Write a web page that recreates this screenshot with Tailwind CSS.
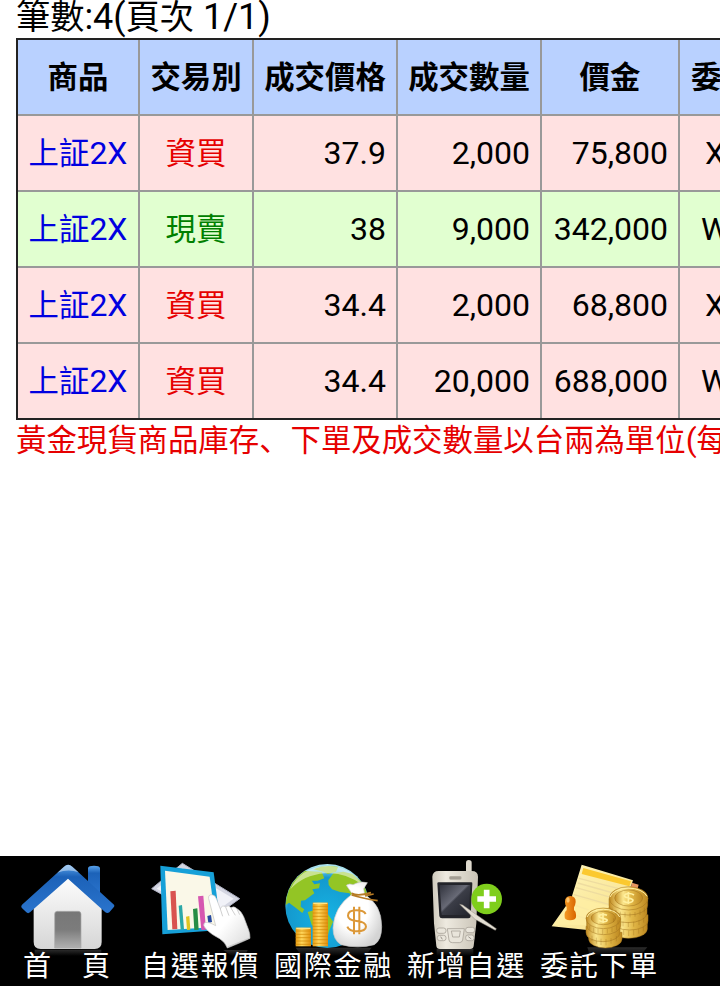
<!DOCTYPE html>
<html lang="zh-Hant">
<head>
    <meta charset="UTF-8">
    <meta name="viewport" content="width=device-width, initial-scale=1.0">
    <title>成交查詢</title>
    <script src="https://cdn.jsdelivr.net/npm/@tailwindcss/browser@4"></script>
    <style>
        body {
            font-family: Roboto, "Noto Sans CJK TC", sans-serif;
        }
    </style>
</head>
<body class="bg-white text-black h-[986px] w-[720px] overflow-hidden flex flex-col">

    <main class="flex-1 overflow-hidden pl-4 whitespace-nowrap text-[32px]">
        <p class="h-[38px] text-[36px] leading-[34px]"><span class="text-[34.2px]">筆數</span>:4(<span class="text-[34.2px]">頁次</span> 1/1)</p>

        <!-- 成交明細 -->
        <div class="w-[808px] border-2 border-[#222] bg-[#999] grid grid-cols-[120px_112px_142px_142px_136px_142px] auto-rows-[74px] gap-0.5 leading-[74px] *:overflow-hidden">
            <div class="bg-[#b9d1ff] text-center font-bold text-[30.4px] pt-px">商品</div>
            <div class="bg-[#b9d1ff] text-center font-bold text-[30.4px] pt-px">交易別</div>
            <div class="bg-[#b9d1ff] text-center font-bold text-[30.4px] pt-px">成交價格</div>
            <div class="bg-[#b9d1ff] text-center font-bold text-[30.4px] pt-px">成交數量</div>
            <div class="bg-[#b9d1ff] text-center font-bold text-[30.4px] pt-px">價金</div>
            <div class="bg-[#b9d1ff] pl-[11px] font-bold text-[30.4px] pt-px">委</div>

            <div class="bg-[#ffe1e1] text-center text-[#0000e0]"><span class="text-[30.4px]">上証</span>2X</div>
            <div class="bg-[#ffe1e1] text-center text-[30.4px] text-[#e60000] pt-px">資買</div>
            <div class="bg-[#ffe1e1] text-right pr-[10px]">37.9</div>
            <div class="bg-[#ffe1e1] text-right pr-[10px]">2,000</div>
            <div class="bg-[#ffe1e1] text-right pr-[10px]">75,800</div>
            <div class="bg-[#ffe1e1] pl-[25px]">X</div>

            <div class="bg-[#e1ffd0] text-center text-[#0000e0]"><span class="text-[30.4px]">上証</span>2X</div>
            <div class="bg-[#e1ffd0] text-center text-[30.4px] text-[#008000] pt-px">現賣</div>
            <div class="bg-[#e1ffd0] text-right pr-[10px]">38</div>
            <div class="bg-[#e1ffd0] text-right pr-[10px]">9,000</div>
            <div class="bg-[#e1ffd0] text-right pr-[10px]">342,000</div>
            <div class="bg-[#e1ffd0] pl-[21px]">W</div>

            <div class="bg-[#ffe1e1] text-center text-[#0000e0]"><span class="text-[30.4px]">上証</span>2X</div>
            <div class="bg-[#ffe1e1] text-center text-[30.4px] text-[#e60000] pt-px">資買</div>
            <div class="bg-[#ffe1e1] text-right pr-[10px]">34.4</div>
            <div class="bg-[#ffe1e1] text-right pr-[10px]">2,000</div>
            <div class="bg-[#ffe1e1] text-right pr-[10px]">68,800</div>
            <div class="bg-[#ffe1e1] pl-[25px]">X</div>

            <div class="bg-[#ffe1e1] text-center text-[#0000e0]"><span class="text-[30.4px]">上証</span>2X</div>
            <div class="bg-[#ffe1e1] text-center text-[30.4px] text-[#e60000] pt-px">資買</div>
            <div class="bg-[#ffe1e1] text-right pr-[10px]">34.4</div>
            <div class="bg-[#ffe1e1] text-right pr-[10px]">20,000</div>
            <div class="bg-[#ffe1e1] text-right pr-[10px]">688,000</div>
            <div class="bg-[#ffe1e1] pl-[21px]">W</div>
        </div>

        <p class="leading-[36px] text-[#e60000]"><span class="text-[30.4px]">黃金現貨商品庫存<span class="mr-px font-['Noto_Sans_CJK_SC']" lang="zh-CN">、</span>下單及成交數量以台兩為單位</span>(<span class="text-[30.4px]">每</span></p>
    </main>

    <!-- 底部選單 -->
    <nav class="h-[130px] bg-black text-white grid grid-cols-[repeat(5,133px)] text-[28px] leading-[28px] tracking-[1.7px] whitespace-nowrap">
        <a class="flex flex-col items-center">
            <svg class="w-[133px] h-[100px] shrink-0" viewBox="0 18 399 300">
                <defs>
                    <linearGradient id="roof" x1="0" y1="0" x2="0" y2="1"><stop offset="0" stop-color="#5aa4ec"/><stop offset=".25" stop-color="#1c62b8"/><stop offset="1" stop-color="#2a74cd"/></linearGradient>
                    <linearGradient id="wall" x1="0" y1="0" x2="0" y2="1"><stop offset="0" stop-color="#fff"/><stop offset="1" stop-color="#d6d6d6"/></linearGradient>
                    <linearGradient id="door" x1="0" y1="0" x2="0" y2="1"><stop offset="0" stop-color="#777"/><stop offset=".5" stop-color="#7c7c7c"/><stop offset="1" stop-color="#b0b0b0"/></linearGradient>
                    <linearGradient id="mirror" x1="0" y1="0" x2="0" y2="1"><stop offset="0" stop-color="#2c2c2c"/><stop offset="1" stop-color="#000"/></linearGradient>
                </defs>
                <path d="M104 299H304V318H104Z" fill="url(#mirror)"/>
                <path d="M264 54Q266 47 282 47Q298 47 300 54V136L264 104Z" fill="url(#roof)"/>
                <path d="M101 160L204 70L305 160V276Q305 297 284 297H122Q101 297 101 276Z" fill="url(#wall)"/>
                <path d="M164 294V192Q164 184 172 184H235Q243 184 243 192V294Z" fill="url(#door)" stroke="#aaa" stroke-width="2"/>
                <path d="M192 50Q204 38 217 50L342 164Q345 168 341 172L328 187Q322 191 316 187L204 86L90 187Q84 192 79 187L65 173Q62 168 66 164Z" fill="url(#roof)"/>
                <path d="M192 50Q204 38 217 50L236 67Q205 56 172 68Z" fill="#fff" opacity=".45"/>
            </svg>
            <span class="-mt-[3px] w-[87px] flex justify-between tracking-normal"><span>首</span><span>頁</span></span>
        </a>
        <a class="flex flex-col items-center">
            <svg class="w-[133px] h-[100px] shrink-0" viewBox="-6 18 399 300">
                <defs>
                    <linearGradient id="hand" x1="0" y1="0" x2="1" y2="1"><stop offset=".5" stop-color="#fff"/><stop offset="1" stop-color="#d8d8d8"/></linearGradient>
                </defs>
                <path d="M265 300H338L330 318H290Z" fill="url(#mirror)"/>
                <path d="M50 116L142 40L314 146L222 212Z" fill="#d4d6e2" stroke="#aeb1c2" stroke-width="3"/>
                <path d="M65 116L142 54L296 146L222 200Z" fill="#f1f2f8"/>
                <path d="M76 47L236 67L259 240L82 253Z" fill="#16a0d8"/>
                <path d="M90 62L224 80L244 231L98 240Z" fill="#faf8e8"/>
                <path d="M106 124L122 122L127 237L112 238Z" fill="#d95350"/>
                <path d="M131 167L141 165L147 238L137 239Z" fill="#2aa8a8"/>
                <path d="M153 200L163 198L166 239L156 240Z" fill="#dfc520"/>
                <path d="M174 177L187 175L191 239L178 240Z" fill="#278d45"/>
                <path d="M189 139L205 137L213 239L199 240Z" fill="#d657b0"/>
                <path d="M217 198L228 195L231 216L220 219Z" fill="#2749a0"/>
                <path d="M221 146Q219 134 231 134Q241 135 245 148L256 177Q260 164 272 170Q280 164 288 173Q297 167 306 176Q318 182 326 200L341 240Q345 250 345 265Q322 276 277 294Q271 277 254 266Q229 254 214 238Q202 226 208 219Q216 214 232 222L242 227Z" fill="url(#hand)" stroke="#c2c2c2" stroke-width="2"/>
                <path d="M256 177L263 199M272 171L282 197M288 174L301 196M306 177L314 194M277 291L344 264" fill="none" stroke="#c5c5c5" stroke-width="2.5"/>
            </svg>
            <span class="-mt-[3px] pl-[2px]">自選報價</span>
        </a>
        <a class="flex flex-col items-center">
            <svg class="w-[133px] h-[100px] shrink-0" viewBox="3 18 399 300">
                <defs>
                    <radialGradient id="globe" cx=".5" cy=".65" r=".65"><stop offset="0" stop-color="#17b4e4"/><stop offset=".75" stop-color="#1499ce"/><stop offset="1" stop-color="#b5e8f0"/></radialGradient>
                    <linearGradient id="gold" x1="0" y1="0" x2="1" y2="0"><stop offset="0" stop-color="#e99d13"/><stop offset=".4" stop-color="#ffd75c"/><stop offset="1" stop-color="#e08e0c"/></linearGradient>
                    <radialGradient id="sack" cx=".4" cy=".4" r=".65"><stop offset=".5" stop-color="#fff"/><stop offset="1" stop-color="#d4d4d4"/></radialGradient>
                    <clipPath id="earth"><circle cx="187" cy="168" r="125"/></clipPath>
                </defs>
                <path d="M92 293H320L300 318H110Z" fill="url(#mirror)"/>
                <circle cx="187" cy="168" r="126" fill="url(#globe)"/>
                <g clip-path="url(#earth)" fill="#93c525">
                    <path d="M55 170L70 105L118 62L170 66L178 85L158 92L140 92L148 103L165 100L162 115L142 118L148 130L120 151L108 152L107 170L118 178L112 189L90 172L72 158Z"/>
                    <path d="M145 58Q180 42 219 51L213 66L188 72L176 65Z"/>
                    <path d="M190 91L205 70L235 65L262 72L300 105L312 150L280 180L262 160L254 130L225 126L201 118L191 105Z"/>
                    <path d="M128 186L150 180L189 193L204 215L192 243L182 286L160 240L140 225Z"/>
                </g>
                <path d="M76 118Q105 52 187 47Q258 49 293 105Q240 65 180 70Q115 75 76 118Z" fill="#fff" opacity=".5"/>
                <path d="M92 233H138V289H92Z" fill="url(#gold)"/>
                <path d="M143 158H189V289H143Z" fill="url(#gold)"/>
                <path d="M92 243H138M92 253H138M92 263H138M92 273H138M92 283H138M143 169H189M143 179H189M143 189H189M143 199H189M143 209H189M143 219H189M143 229H189M143 239H189M143 249H189M143 259H189M143 269H189M143 280H189" stroke="#cf8500" stroke-width="2"/>
                <path d="M94 235H136M145 160H187" stroke="#ffe486" stroke-width="4"/>
                <path d="M262 132L244 106Q253 99 264 104L276 99Q290 94 307 98L296 116L299 134Q350 163 350 230Q350 270 328 284Q278 297 228 284Q204 270 204 234Q207 170 262 132Z" fill="url(#sack)" stroke="#c9c9c9" stroke-width="2"/>
                <path d="M260 130Q278 140 318 128M260 135Q290 145 338 152M300 138L326 132" fill="none" stroke="#b77b25" stroke-width="5"/>
                <path d="M302 192Q296 181 274 181Q249 181 249 197Q249 210 275 213Q303 216 303 230Q302 244 276 244Q252 244 247 230M267 170V253M283 170V253" fill="none" stroke="#dc9838" stroke-width="6"/>
            </svg>
            <span class="-mt-[3px] pl-[2px]">國際金融</span>
        </a>
        <a class="flex flex-col items-center">
            <svg class="w-[133px] h-[100px] shrink-0" viewBox="-3 18 399 300">
                <defs>
                    <linearGradient id="shell" x1="0" y1="0" x2="1" y2="0"><stop offset="0" stop-color="#cfcabd"/><stop offset=".3" stop-color="#eeeae0"/><stop offset="1" stop-color="#c9c3b6"/></linearGradient>
                    <linearGradient id="lcd" x1="0" y1="0" x2="1" y2="1"><stop offset="0" stop-color="#30323c"/><stop offset=".45" stop-color="#686a76"/><stop offset=".5" stop-color="#3b3d47"/><stop offset="1" stop-color="#22242c"/></linearGradient>
                </defs>
                <path d="M110 297H220V318H110Z" fill="url(#mirror)"/>
                <path d="M198 70V38Q198 30 206 30Q215 30 215 38V70Z" fill="#dfdace"/>
                <path d="M97 80Q98 63 116 63H215Q234 63 234 80L229 220L221 288Q220 297 210 297H120Q110 297 109 288L102 220Z" fill="url(#shell)"/>
                <rect x="147" y="78" width="38" height="11" rx="5" fill="#b7b1a5"/>
                <path d="M150 82H182M150 86H182" stroke="#8a857c" stroke-width="1.5"/>
                <path d="M112 100Q112 97 116 97H213Q218 97 217 101L212 198Q212 205 205 205H126Q119 205 118 198Z" fill="#23242a"/>
                <path d="M119 105H211L206 195H125Z" fill="url(#lcd)"/>
                <g fill="#e9e5db" stroke="#aaa49a" stroke-width="2.5">
                    <rect x="110" y="234" width="28" height="16" rx="7"/>
                    <rect x="112" y="256" width="26" height="16" rx="7"/>
                    <rect x="197" y="232" width="27" height="16" rx="7"/>
                    <rect x="197" y="255" width="25" height="17" rx="7"/>
                    <path d="M142 236H193L188 270Q186 278 178 278H157Q148 278 147 270Z"/>
                    <path d="M154 243H181L178 261H158Z"/>
                </g>
                <path d="M122 260L127 268M205 260L214 267" stroke="#98928a" stroke-width="3"/>
                <circle cx="260" cy="147" r="46" fill="#7fce1c"/>
                <path d="M260 119V175M232 147H288" stroke="#fff" stroke-width="17"/>
                <path d="M179 163L188 165L289 236L286 241L225 208Z" fill="#e4dfd3" stroke="#958f84" stroke-width="1.5"/>
            </svg>
            <span class="-mt-[3px] pl-[2px]">新增自選</span>
        </a>
        <a class="flex flex-col items-center">
            <svg class="w-[133px] h-[100px] shrink-0" viewBox="6 18 399 300">
                <defs>
                    <linearGradient id="coin" x1="0" y1="0" x2="1" y2="0"><stop offset="0" stop-color="#c08a22"/><stop offset=".3" stop-color="#fbe68c"/><stop offset=".6" stop-color="#e2b848"/><stop offset="1" stop-color="#bd8820"/></linearGradient>
                    <linearGradient id="stamp" x1="0" y1="0" x2="1" y2="0"><stop offset="0" stop-color="#f59a24"/><stop offset="1" stop-color="#d86500"/></linearGradient>
                    <linearGradient id="paper" x1="0" y1="0" x2="1" y2="1"><stop offset="0" stop-color="#fff6bd"/><stop offset="1" stop-color="#f7df86"/></linearGradient>
                </defs>
                <path d="M172 292H352L330 318H180Z" fill="url(#mirror)"/>
                <path d="M306 98L326 104L320 125L300 120Z" fill="#e79661"/>
                <path d="M155 44L309 91L262 225L172 240L65 229L124 145Z" fill="url(#paper)"/>
                <path d="M160 54L303 94L298 109L155 72Z" fill="#fbc92f"/>
                <path d="M147 85L263 115M143 99L250 129M138 113L243 142M132 134L236 163M124 162L176 180M111 190L168 205" stroke="#eedca0" stroke-width="4"/>
                <path d="M130 142L237 168L170 225L72 224L125 150" fill="#ffefa4" opacity=".7"/>
                <path d="M105 156Q104 139 121 138Q138 139 137 156Q136 166 132 172V181Q139 184 138 202Q136 211 120 211Q103 210 104 201Q102 186 110 181V172Q105 165 105 156Z" fill="url(#stamp)"/>
                <ellipse cx="114" cy="150" rx="5" ry="8" fill="#ffc46b"/>
                <g fill="url(#coin)" stroke="#a0731f" stroke-width="1.5">
                    <path d="M238 217V237A57 28 0 0 0 352 237V217Z"/>
                    <path d="M244 194V213A55 27 0 0 0 354 213V194Z"/>
                    <path d="M237 170V190A57 28 0 0 0 351 190V170Z"/>
                    <path d="M237 146V166A58 29 0 0 0 353 166V146Z"/>
                    <ellipse cx="296" cy="145" rx="58" ry="35"/>
                    <ellipse cx="296" cy="144" rx="42" ry="24"/>
                    <path d="M176 247V267A50 27 0 0 0 276 267V247Z"/>
                    <path d="M168 229V248A51 27 0 0 0 270 248V229Z"/>
                    <path d="M170 206V226A51 28 0 0 0 272 226V206Z"/>
                    <ellipse cx="220" cy="205" rx="52" ry="31"/>
                    <ellipse cx="220" cy="204" rx="37" ry="20"/>
                </g>
                <path d="M240 141A57 33 0 0 1 351 139M171 201A50 29 0 0 1 269 201" fill="none" stroke="#fff1a6" stroke-width="3"/>
                <path d="M312 135Q300 127 286 133Q277 141 295 144Q315 148 306 155Q293 162 280 153M295 126V162M231 196Q219 190 208 196Q204 202 219 205Q237 208 229 214Q217 219 207 211M219 189V219" fill="none" stroke="#fff0a0" stroke-width="5"/>
                <path d="M246 173V186M258 180V194M271 185V199M285 187V202M300 188V202M315 186V200M330 181V195M343 173V187M251 205V217M264 211V224M279 215V229M295 217V231M311 215V230M327 211V225M341 204V218M281 240V255M296 242V258M311 240V256M326 237V251M340 230V244M179 226V239M191 233V246M204 236V250M218 238V252M232 237V250M246 233V246M260 226V240M186 257V273M199 263V281M213 266V285M228 267V286M243 264V281M259 258V274" stroke="#8d5f12" stroke-width="1.5" opacity=".55"/>
            </svg>
            <span class="-mt-[3px] pl-[2px]">委託下單</span>
        </a>
    </nav>

</body>
</html>
